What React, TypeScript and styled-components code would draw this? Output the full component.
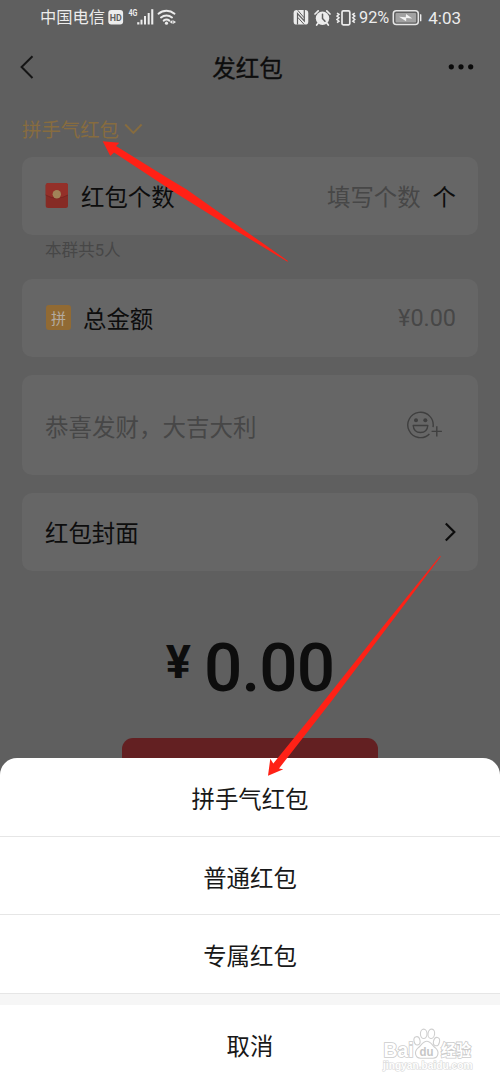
import React from 'react';
import styled, { createGlobalStyle } from 'styled-components';

const GlobalStyle = createGlobalStyle`
  * { box-sizing: border-box; }
  body {
    margin: 0;
    background: #5f5f5f;
    font-family: Roboto, 'Noto Sans CJK SC', sans-serif;
    color: #0d0d0d;
  }
`;

const Screen = styled.div`
  position: relative;
  width: 500px;
  height: 1083px;
  overflow: hidden;
  display: flex;
  flex-direction: column;
  background: #5f5f5f;
`;

const StatusBar = styled.header`
  display: flex;
  align-items: center;
  justify-content: space-between;
  height: 36px;
  padding: 0 39px 0 40px;
  color: #ececec;
  font-size: 16.3px;
`;

const StatusGroup = styled.div`
  display: flex;
  align-items: center;
`;

const StatusText = styled.span<{ $gap?: number; $size?: number }>`
  margin-left: ${(p) => p.$gap ?? 0}px;
  font-size: ${(p) => p.$size ?? 16.3}px;
  line-height: 36px;
  white-space: nowrap;
`;

const StatusIcon = styled.svg<{ $gap?: number }>`
  display: block;
  flex: none;
  margin-left: ${(p) => p.$gap ?? 0}px;
`;

const NavBar = styled.nav`
  display: flex;
  align-items: center;
  justify-content: space-between;
  height: 64px;
  padding: 0 26px 0 20px;
`;

const Title = styled.h1`
  margin: 0;
  padding: 2px 0 0 11px;
  font-size: 23.5px;
  font-weight: 400;
  line-height: 62px;
  -webkit-text-stroke: 0.35px #0d0d0d;
`;

const Glyph = styled.svg`
  display: block;
  flex: none;
`;

const TypePicker = styled.div`
  display: flex;
  align-items: center;
  gap: 5px;
  height: 57px;
  padding: 0 22px;
  color: #876c3f;
  font-size: 19.4px;
`;

const Card = styled.section<{ $height: number; $gap?: number }>`
  display: flex;
  align-items: center;
  flex: none;
  height: ${(p) => p.$height}px;
  margin: 0 22px ${(p) => p.$gap ?? 0}px;
  padding: 0 22px 0 23px;
  border-radius: 10px;
  background: #666;
  font-size: 23.4px;
`;

const Label = styled.span<{ $gap?: number }>`
  flex: 1;
  margin-left: ${(p) => p.$gap ?? 0}px;
`;

const Placeholder = styled.span`
  color: #474747;
`;

const Greeting = styled(Placeholder)`
  flex: 1;
  padding-top: 1px;
  font-size: 23.5px;
`;

const Unit = styled.span`
  margin-left: 12px;
`;

const Hint = styled.p`
  height: 44px;
  margin: 0;
  padding-left: 45px;
  color: #474747;
  font-size: 16.6px;
  line-height: 31px;
`;

const PinBadge = styled.span`
  display: flex;
  align-items: center;
  justify-content: center;
  width: 25px;
  height: 25px;
  margin: -1px -1px 0 1px;
  border-radius: 3px;
  background: #916a33;
  color: #b3aba1;
  font-size: 15px;
`;

const Amount = styled.div`
  display: flex;
  align-items: flex-start;
  justify-content: center;
  height: 167px;
  padding: 56px 0 0 0;
  font-weight: 500;
`;

const Currency = styled.span`
  margin-right: 13px;
  font-size: 47px;
  font-weight: 700;
  line-height: 69px;
`;

const Digits = styled.span`
  font-size: 67.5px;
  letter-spacing: -0.9px;
  line-height: 81px;
`;

const SubmitButton = styled.div`
  align-self: center;
  width: 256px;
  height: 60px;
  border-radius: 11px;
  background: #632022;
`;

const Sheet = styled.div`
  position: absolute;
  left: 0;
  right: 0;
  top: 758px;
  bottom: 0;
  display: flex;
  flex-direction: column;
  border-radius: 17px 17px 0 0;
  background: #fff;
  color: #181818;
  overflow: hidden;
`;

const SheetItem = styled.div`
  flex: none;
  height: 78.6px;
  padding-top: 2px;
  border-bottom: 1px solid #e6e6e6;
  font-size: 23.4px;
  line-height: 80px;
  text-align: center;
`;

const SheetGap = styled.div`
  flex: none;
  height: 11px;
  background: #f6f6f6;
`;

const CancelItem = styled.div`
  flex: none;
  height: 78px;
  font-size: 23.4px;
  line-height: 85px;
  text-align: center;
`;

const Watermark = styled.svg`
  position: absolute;
  left: 380px;
  top: 1025px;
`;

const Pointers = styled.svg`
  position: absolute;
  left: 0;
  top: 0;
`;

const SheetOptions = ['拼手气红包', '普通红包', '专属红包'];

function HdIcon() {
  return (
    <StatusIcon $gap={3} width="16" height="16" viewBox="0 0 16 16">
      <rect x="0.3" y="0" width="14.8" height="14.6" rx="3" fill="#ececec" />
      <text x="7.7" y="10.8" textAnchor="middle" fontSize="9.6" fontWeight="700" fill="#5f5f5f" textLength="12" lengthAdjust="spacingAndGlyphs">HD</text>
    </StatusIcon>
  );
}

function SignalIcon() {
  return (
    <StatusIcon $gap={4} width="27" height="20" viewBox="0 0 27 20">
      <text x="0.5" y="7.8" fontSize="9" fontWeight="700" fill="#ececec" textLength="9" lengthAdjust="spacingAndGlyphs">4G</text>
      <g fill="#ececec">
        <rect x="9.2" y="14.2" width="2.2" height="2.3" />
        <rect x="12.5" y="11.7" width="2" height="4.8" />
        <rect x="16" y="8" width="2" height="8.5" />
        <rect x="19.7" y="5" width="2" height="11.5" />
        <rect x="23.2" y="1.2" width="2.1" height="15.3" />
      </g>
    </StatusIcon>
  );
}

function WifiIcon() {
  return (
    <StatusIcon $gap={2} width="20" height="18" viewBox="0 0 20 18">
      <g fill="none" stroke="#ececec" strokeWidth="2" strokeLinecap="round">
        <path d="M1.5 4.7a12.4 12.4 0 0 1 16 0" />
        <path d="M4 8.4a8.7 8.7 0 0 1 11 0" />
        <path d="M6.7 11.6a4.6 4.6 0 0 1 5.6 0" />
      </g>
      <circle cx="9.5" cy="14.2" r="1.6" fill="#ececec" />
      <path d="M15.5 10.9v4.2l-2.8-2.1zM16.2 11.2l2.8 1.8-2.8 2.1z" fill="#ececec" />
    </StatusIcon>
  );
}

function NfcIcon() {
  return (
    <StatusIcon width="16" height="16" viewBox="0 0 16 16">
      <rect x="0.6" y="0" width="14.7" height="14.6" rx="3.2" fill="#ececec" />
      <path d="M4.5 14.6V3.6L11.3 11V0" fill="none" stroke="#5f5f5f" strokeWidth="1.2" />
      <path d="M4.7.2 11.2 7.8M4.7 7.3l6.5 7.2" fill="none" stroke="#5f5f5f" strokeWidth="1" />
    </StatusIcon>
  );
}

function AlarmIcon() {
  return (
    <StatusIcon $gap={5} width="17" height="17" viewBox="0 0 17 17">
      <circle cx="8.5" cy="8.2" r="6.7" fill="#ececec" />
      <path d="M1 4 4.2.9M12.8.9 16 4M4 13.2l-1.3 1.9M13 13.2l1.3 1.9" stroke="#ececec" strokeWidth="1.7" strokeLinecap="round" />
      <path d="M8.5 4.3v4.2l2.5 2.7" fill="none" stroke="#5f5f5f" strokeWidth="1.5" strokeLinecap="round" />
    </StatusIcon>
  );
}

function VibrateIcon() {
  return (
    <StatusIcon $gap={5} width="20" height="17" viewBox="0 0 20 17">
      <rect x="6" y="0.9" width="7.8" height="14" rx="1.3" fill="none" stroke="#ececec" strokeWidth="1.7" />
      <path d="m1 3 2 1.4-2 1.7 2 1.7-2 1.7 2 1.7-2 1.5M18.8 3l-2 1.4 2 1.7-2 1.7 2 1.7-2 1.7 2 1.5" fill="none" stroke="#ececec" strokeWidth="1.5" />
    </StatusIcon>
  );
}

function BatteryIcon() {
  return (
    <StatusIcon $gap={3} width="30" height="16" viewBox="0 0 30 16">
      <rect x="1.3" y="0.8" width="25" height="13.8" rx="3" fill="none" stroke="#e6e6e6" strokeWidth="1.5" />
      <rect x="3.5" y="3" width="20.6" height="9.4" rx="1" fill="#a2a2a2" />
      <path d="M28 4.2h.9q.5 0 .5.5v6q0 .5-.5.5H28z" fill="#ececec" />
      <path d="m7 6.7 6.8.5.2-3.2 6.3 4.5-6-.4-.2 3.2z" fill="#f3f3f3" />
    </StatusIcon>
  );
}

function EnvelopeIcon() {
  return (
    <Glyph width="23" height="26" viewBox="0 0 23 26">
      <rect x="0.7" y="0" width="22.3" height="25" rx="2.5" fill="#862b25" />
      <path d="M.7 12V2.500A2.500 2.500 0 0 1 3.200 0h17.300A2.500 2.500 0 0 1 23 2.500V12Q11.700 18.500.7 12z" fill="#943029" />
      <path d="M.7 12q11 6.500 22.300 0" fill="none" stroke="#74241f" strokeWidth="0.8" />
      <circle cx="11.8" cy="11.3" r="4.2" fill="#a18458" />
    </Glyph>
  );
}

function EmojiIcon() {
  return (
    <Glyph width="49" height="30" viewBox="0 0 49 30">
      <g fill="none" stroke="#3f3f3f" strokeWidth="1.4">
        <path d="M26 17.200A12.700 12.700 0 1 0 22.400 24" />
        <path d="M6.200 15.500h14.600q-.5 7-7.300 7t-7.300-7z" strokeLinejoin="round" />
        <path d="M29.800 16.300v10.300M24.600 21.400h10.300" />
      </g>
      <circle cx="9" cy="10.3" r="2" fill="#3f3f3f" />
      <circle cx="18.3" cy="10.3" r="2" fill="#3f3f3f" />
    </Glyph>
  );
}

function BaiduWatermark() {
  return (
    <Watermark width="100" height="50" viewBox="0 0 100 50">
      <g fill="#fff" stroke="#cfcfcf" strokeWidth="1.1" strokeLinejoin="round">
        <ellipse cx="37" cy="15.8" rx="3" ry="4.2" transform="rotate(-12 37 15.8)" />
        <ellipse cx="43.7" cy="8.8" rx="3.3" ry="4.7" />
        <ellipse cx="51.3" cy="8.8" rx="3.3" ry="4.7" transform="rotate(8 51.3 8.8)" />
        <ellipse cx="56.5" cy="16.6" rx="3" ry="4.2" transform="rotate(14 56.5 16.6)" />
        <path d="M46.8 16.200c4 0 5.600 4.400 8.400 6.500 4.800 4 3 10.500-2.200 10.500H40.500c-5.200 0-7-6.500-2.200-10.500 2.800-2.100 4.500-6.500 8.500-6.500z" />
      </g>
      <g fontFamily="'Liberation Sans', 'Noto Sans CJK SC', sans-serif" fontWeight="700" fill="#fff" stroke="#cbcbcb" paintOrder="stroke" strokeWidth="1.6">
        <text x="3.5" y="32.3" fontSize="19.5" textLength="30" lengthAdjust="spacingAndGlyphs">Bai</text>
        <text x="61" y="31" fontSize="16" textLength="30" lengthAdjust="spacingAndGlyphs">经验</text>
      </g>
      <text x="39.5" y="30.5" fontFamily="'Liberation Sans', sans-serif" fontSize="13" fontWeight="700" fill="#c6c6c6" textLength="14" lengthAdjust="spacingAndGlyphs">du</text>
      <text x="3" y="44" fontFamily="'Liberation Sans', sans-serif" fontSize="10" fontWeight="700" fill="#fff" stroke="#d8d8d8" strokeWidth="1.2" paintOrder="stroke" textLength="89.5" lengthAdjust="spacingAndGlyphs">jingyan.baidu.com</text>
    </Watermark>
  );
}

export default function App() {
  return (
    <>
      <GlobalStyle />
      <Screen>
        <StatusBar>
          <StatusGroup>
            <StatusText>中国电信</StatusText>
            <HdIcon />
            <SignalIcon />
            <WifiIcon />
          </StatusGroup>
          <StatusGroup>
            <NfcIcon />
            <AlarmIcon />
            <VibrateIcon />
            <StatusText $gap={3}>92%</StatusText>
            <BatteryIcon />
            <StatusText $gap={6} $size={17}>4:03</StatusText>
          </StatusGroup>
        </StatusBar>

        <NavBar>
          <Glyph width="16" height="26" viewBox="0 0 16 26">
            <path d="M12.5 1.3 1.6 12l10.900 11" fill="none" stroke="#151515" strokeWidth="2" />
          </Glyph>
          <Title>发红包</Title>
          <Glyph width="26" height="8" viewBox="0 0 26 8">
            <circle cx="3.3" cy="2.8" r="2.6" fill="#0a0a0a" />
            <circle cx="13" cy="2.8" r="2.6" fill="#0a0a0a" />
            <circle cx="22.7" cy="2.8" r="2.6" fill="#0a0a0a" />
          </Glyph>
        </NavBar>

        <TypePicker>
          <span>拼手气红包</span>
          <Glyph width="20" height="12" viewBox="0 0 20 12">
            <path d="m1.2 1.5 8.200 8.300 8.200-8.300" fill="none" stroke="#876c3f" strokeWidth="1.9" />
          </Glyph>
        </TypePicker>

        <Card $height={78}>
          <EnvelopeIcon />
          <Label $gap={13}>红包个数</Label>
          <Placeholder>填写个数</Placeholder>
          <Unit>个</Unit>
        </Card>
        <Hint>本群共5人</Hint>

        <Card $height={78} $gap={18}>
          <PinBadge>拼</PinBadge>
          <Label $gap={13}>总金额</Label>
          <Placeholder>¥0.00</Placeholder>
        </Card>

        <Card $height={100} $gap={18}>
          <Greeting>恭喜发财，大吉大利</Greeting>
          <EmojiIcon />
        </Card>

        <Card $height={78}>
          <Label>红包封面</Label>
          <Glyph width="12" height="20" viewBox="0 0 12 20">
            <path d="m1.8 1.500 8.500 8.500-8.500 8.500" fill="none" stroke="#0d0d0d" strokeWidth="2.2" />
          </Glyph>
        </Card>

        <Amount>
          <Currency>¥</Currency>
          <Digits>0.00</Digits>
        </Amount>
        <SubmitButton />

        <Sheet>
          {SheetOptions.map((option) => (
            <SheetItem key={option}>{option}</SheetItem>
          ))}
          <SheetGap />
          <CancelItem>取消</CancelItem>
        </Sheet>

        <BaiduWatermark />

        <Pointers width="500" height="1083" viewBox="0 0 500 1083">
          <g fill="#ff2116">
            <path d="M102.700 141.300 119.300 142.700 116 146 166.700 177.500 186.700 189.500 288 261 287.500 261.800 230 227 173.300 191.500 114 152.500 110.300 156z" />
            <path d="M268 775.700 270.300 758.700 273.300 763.500 320 706 389 619 440 556 440.800 556.500 392.500 620.500 332 700.500 279 768.500 283.300 769.300z" />
          </g>
        </Pointers>
      </Screen>
    </>
  );
}
